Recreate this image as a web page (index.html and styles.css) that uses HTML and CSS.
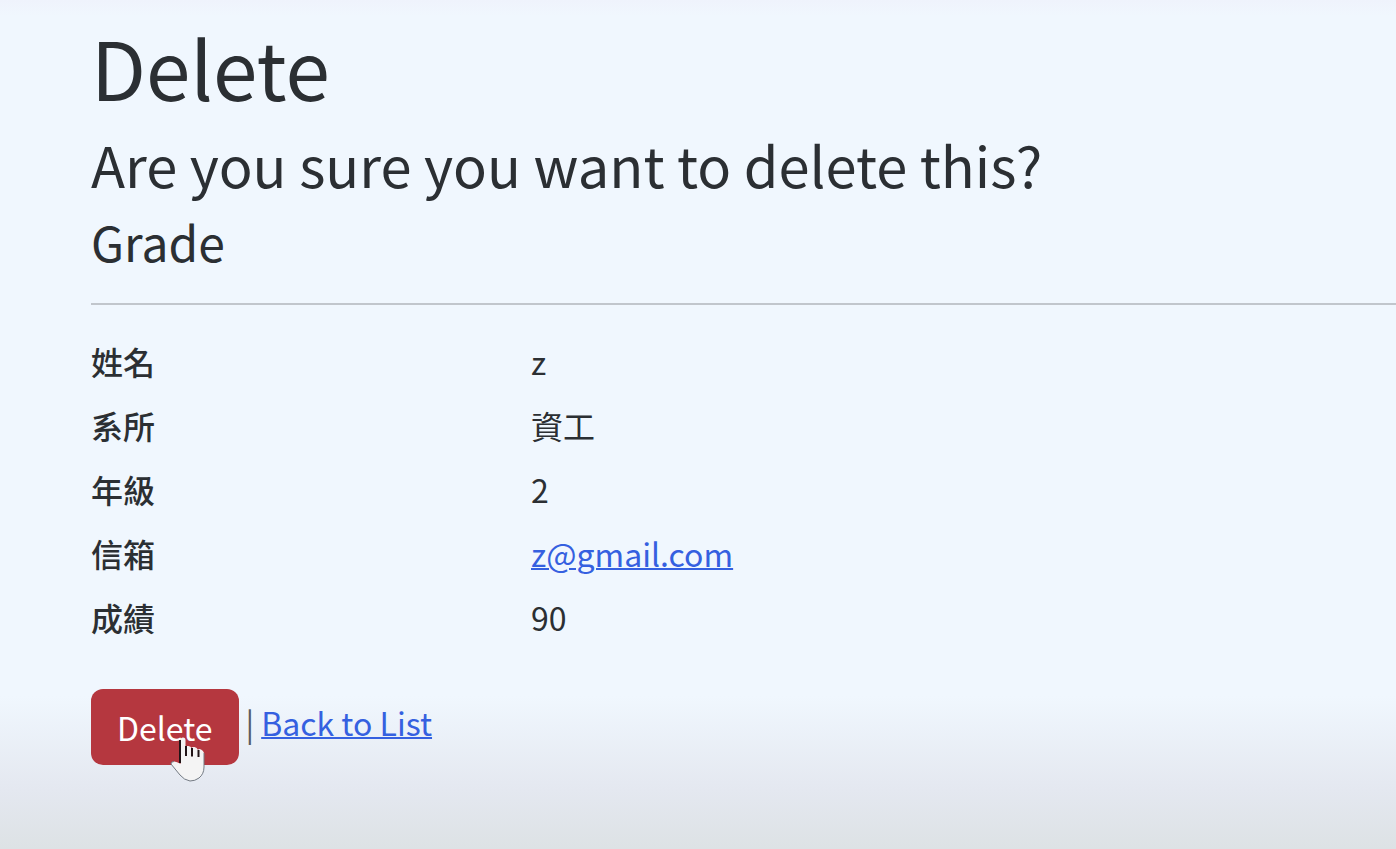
FILE: index.html
```html
<!DOCTYPE html>
<html lang="zh-Hant">
<head>
<meta charset="utf-8">
<title>Delete</title>
<link rel="stylesheet" href="styles.css">
</head>
<body>
<main class="page">
  <h1 class="title">Delete</h1>
  <h3 class="question">Are you sure you want to delete this?</h3>
  <h4 class="entity">Grade</h4>
  <hr class="rule">
  <dl class="details">
    <dt>姓名</dt><dd>z</dd>
    <dt>系所</dt><dd>資工</dd>
    <dt>年級</dt><dd>2</dd>
    <dt>信箱</dt><dd><a href="mailto:z@gmail.com">z@gmail.com</a></dd>
    <dt>成績</dt><dd>90</dd>
  </dl>
  <form class="actions">
    <button class="delete" type="button">Delete
      <svg class="pointer" viewBox="0 0 36 46" aria-hidden="true">
        <path d="M10.500 27V4Q10.500 1.500 13 1.500T15.500 4V11Q16 9.500 18.500 10T21.500 12Q22 10.500 24.500 11T28 14Q28.500 12.500 31 13.500T34 17V31Q34 38 29 42Q25 45 20 45Q14 44 10 39L1 28Q1 25.500 4 25.500Q7 25.500 10.500 28Z" fill="#f4f4f4"/>
        <path d="M34 17V31Q34 38 29 42Q25 45 20 45Q14 44 10 39L1 28Q1 25.500 4 25.500" fill="none" stroke="#737a83" stroke-width="1"/>
        <path d="M10 27V4M16 10V20M22 12V20.500M28.500 14V21" fill="none" stroke="#211417" stroke-width="2"/>
      </svg>
    </button>
    <span class="divider">|</span>
    <a href="#">Back to List</a>
  </form>
</main>
</body>
</html>
```
FILE: styles.css
```css
body {
  margin: 0;
  min-height: 100vh;
  color: #2b2f33;
  background: linear-gradient(#eff3fc 0, #f0f7fe 16px, #f0f7fe 82%, #e4e8f0 93%, #dde2e5 100%);
  font: 32px/48px "Noto Sans CJK TC", sans-serif;
}
.page { padding: 20px 0 24px 91px; }
h1, h3, h4 { margin: 0; font-weight: 400; }
.title { font-size: 80px; line-height: 92px; }
.question { margin-top: 20px; font-size: 56px; line-height: 64px; }
.entity { margin-top: 17px; font-size: 48px; line-height: 56px; }
.rule { margin: 34px 0 32px; border: 0; border-top: 2px solid #c1c6cc; }
.details {
  display: grid;
  grid-template-columns: 440px 1fr;
  row-gap: 16px;
  margin: 0;
}
dt { font-weight: 500; }
dd { margin: 0; }
a { color: #3560e0; text-decoration-thickness: 2px; }
.actions { display: flex; gap: 7px; margin-top: 48px; }
.delete {
  position: relative;
  padding: 14px 26px;
  border: 0;
  border-radius: 12px;
  background: #b5373f;
  color: #fff;
  font: inherit;
}
.pointer { position: absolute; left: 79px; top: 47px; width: 36px; height: 46px; }
.divider { margin-top: 9px; color: #555b62; }
.actions a { margin-top: 9px; }
```
